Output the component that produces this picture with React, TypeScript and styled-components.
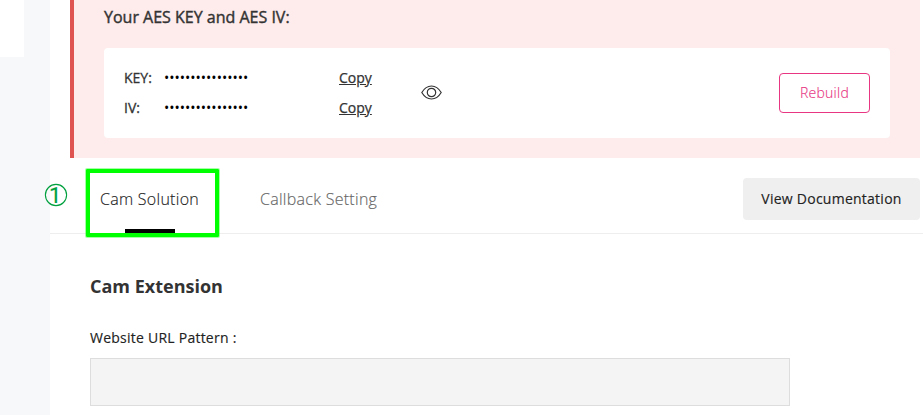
import React from "react";
import styled, { createGlobalStyle } from "styled-components";

const GlobalStyle = createGlobalStyle`
  * { box-sizing: border-box; }
  body { margin: 0; background: #fff; font-family: "Open Sans", sans-serif; color: #333; overflow: hidden; }
  button { font-family: inherit; }
`;

const Page = styled.div`
  display: flex;
  width: 923px;
  height: 415px;
  overflow: hidden;
`;

const Sidebar = styled.aside`
  width: 50px;
  flex: none;
  background: #f7f8fa;
`;

const SidebarPanel = styled.div`
  width: 24px;
  height: 57px;
  background: #fff;
`;

const Main = styled.main`
  flex: 1;
  min-width: 0;
  background: #fff;
`;

const Alert = styled.section`
  width: 850px;
  height: 158px;
  margin-left: 20px;
  padding: 6px 30px 0;
  border-left: 4px solid #df5350;
  background: #feebeb;
`;

const AlertTitle = styled.h3`
  margin: 0 0 20px;
  font-size: 16px;
  line-height: 22px;
  font-weight: 400;
  -webkit-text-stroke: 0.4px #333;
  white-space: nowrap;
`;

const KeyCard = styled.div`
  display: flex;
  align-items: center;
  height: 90px;
  padding: 0 20px;
  border-radius: 4px;
  background: #fff;
`;

const KeyGrid = styled.div`
  display: grid;
  grid-template-columns: 40px 175px 82px;
  grid-auto-rows: 30px;
  align-items: center;
  padding-bottom: 2px;
  font-size: 14px;
`;

const KeyLabel = styled.span`
  -webkit-text-stroke: 0.3px #333;
`;

const Dots = styled.span`
  color: #000;
`;

const CopyLink = styled.a`
  justify-self: start;
  text-decoration: underline;
  -webkit-text-stroke: 0.25px #333;
`;

const EyeIcon = styled.svg`
  display: block;
  margin-bottom: 1px;
`;

const RebuildButton = styled.button`
  width: 91px;
  height: 40px;
  margin-left: auto;
  padding: 0 0 2px;
  border: 1px solid #e83683;
  border-radius: 4px;
  background: #fff;
  color: #e83683;
  font-size: 14px;
  font-weight: 300;
  letter-spacing: 0.28px;
  -webkit-text-stroke: 0.15px #e83683;
`;

const TabBar = styled.nav`
  position: relative;
  display: flex;
  height: 76px;
  padding-left: 50px;
  border-bottom: 1px solid #eee;
`;

const Tab = styled.div<{ $active?: boolean; $width: number }>`
  display: flex;
  flex-direction: column;
  justify-content: space-between;
  width: ${(p) => p.$width}px;
  height: 75px;
  margin-right: 60px;
  padding-top: 30px;
  font-size: 16px;
  line-height: 22px;
  font-weight: 300;
  letter-spacing: 0.28px;
  color: ${(p) => (p.$active ? "#222" : "#666")};
  -webkit-text-stroke: 0.15px currentColor;
  white-space: nowrap;
`;

const TabMarker = styled.span`
  align-self: center;
  width: 50px;
  height: 4px;
  background: #000;
`;

const Highlight = styled.div`
  position: absolute;
  left: 36px;
  top: 11px;
  width: 133px;
  height: 68px;
  border: 4px solid #00ff00;
  border-radius: 1px;
  box-shadow: 0 0 0 1px rgba(0, 255, 0, 0.35);
`;

const StepNumber = styled.svg`
  position: absolute;
  left: -6px;
  top: 25px;
`;

const DocsButton = styled.button`
  width: 177px;
  height: 42px;
  margin: 20px 3px 0 auto;
  padding: 0 0 2px;
  border: 0;
  border-radius: 4px;
  background: #efefef;
  color: #222;
  font-size: 14px;
  font-weight: 500;
  letter-spacing: 0.25px;
  -webkit-text-stroke: 0.15px #222;
`;

const Form = styled.section`
  padding: 40px 40px 0;
`;

const FormTitle = styled.h2`
  margin: 0 0 28px;
  font-size: 18px;
  line-height: 25px;
  font-weight: 700;
`;

const FieldLabel = styled.label`
  display: block;
  margin-bottom: 9px;
  font-size: 14px;
  line-height: 22px;
  font-weight: 500;
  letter-spacing: 0.24px;
  color: #222;
  -webkit-text-stroke: 0.15px #222;
`;

const UrlInput = styled.input`
  display: block;
  width: 700px;
  height: 48px;
  padding: 0 12px;
  border: 1px solid #ddd;
  border-radius: 0;
  background: #f4f4f4;
  outline: 0;
`;

const MASK = "•".repeat(16);

export default function App() {
  return (
    <Page>
      <GlobalStyle />
      <Sidebar>
        <SidebarPanel />
      </Sidebar>
      <Main>
        <Alert>
          <AlertTitle>Your AES KEY and AES IV:</AlertTitle>
          <KeyCard>
            <KeyGrid>
              <KeyLabel>KEY:</KeyLabel>
              <Dots>{MASK}</Dots>
              <CopyLink>Copy</CopyLink>
              <KeyLabel>IV:</KeyLabel>
              <Dots>{MASK}</Dots>
              <CopyLink>Copy</CopyLink>
            </KeyGrid>
            <EyeIcon width="21" height="15" viewBox="0 0 21 15" fill="none" stroke="#333" strokeWidth="1.2">
              <path d="M.8 7.500C3.200 3.500 6.500 1 10.500 1S17.800 3.500 20.200 7.500C17.800 11.500 14.500 14 10.500 14S3.200 11.500 .8 7.500Z" />
              <circle cx="10.500" cy="7.500" r="4.200" />
            </EyeIcon>
            <RebuildButton>Rebuild</RebuildButton>
          </KeyCard>
        </Alert>
        <TabBar>
          <Tab $active $width={100}>
            Cam Solution
            <TabMarker />
          </Tab>
          <Tab $width={118}>Callback Setting</Tab>
          <DocsButton>View Documentation</DocsButton>
          <Highlight />
          <StepNumber width="24" height="24" viewBox="0 0 24 24">
            <circle cx="12" cy="12" r="10.600" fill="none" stroke="#00a03e" strokeWidth="1.1" />
            <text
              x="11.300"
              y="19.500"
              textAnchor="middle"
              fontFamily="Roboto, sans-serif"
              fontSize="22"
              fill="#00a03e"
              stroke="#00a03e"
              strokeWidth="0.200"
            >
              1
            </text>
          </StepNumber>
        </TabBar>
        <Form>
          <FormTitle>Cam Extension</FormTitle>
          <FieldLabel htmlFor="url-pattern">Website URL Pattern :</FieldLabel>
          <UrlInput id="url-pattern" />
        </Form>
      </Main>
    </Page>
  );
}
